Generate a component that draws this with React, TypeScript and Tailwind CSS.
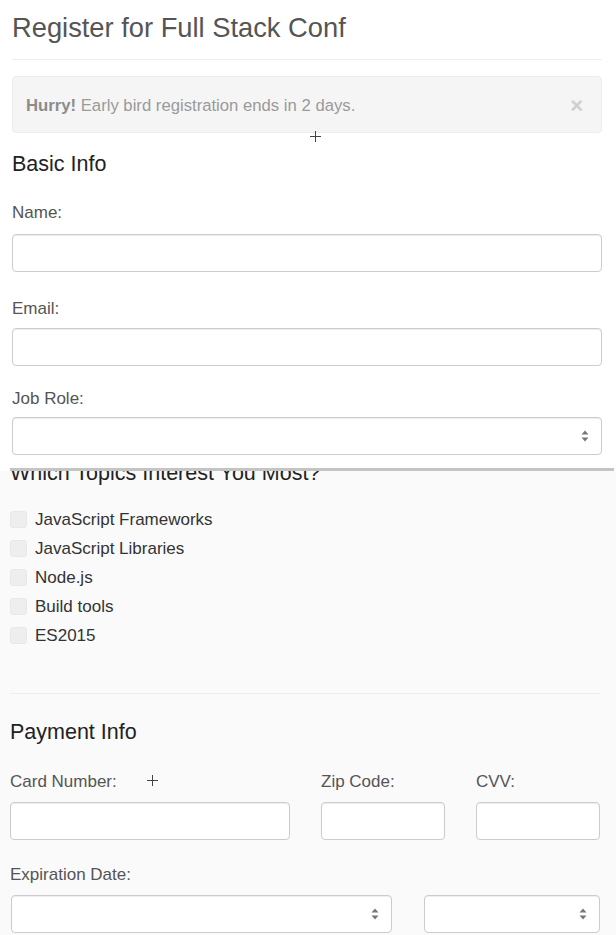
import React from 'react';

const topics = ['JavaScript Frameworks', 'JavaScript Libraries', 'Node.js', 'Build tools', 'ES2015'];

function Arrows() {
  return (
    <svg width="8" height="12" viewBox="0 0 8 12" className="pointer-events-none absolute right-[13px] top-1/2 -translate-y-1/2">
      <path d="M4 0.5 L7.5 4.5 L0.5 4.5 Z" fill="#777" />
      <path d="M4 11.5 L7.5 7.5 L0.5 7.5 Z" fill="#777" />
    </svg>
  );
}

function TextInput({ className = '' }: { className?: string }) {
  return (
    <input
      type="text"
      className={`block h-[38px] rounded-[4px] border border-[#cccccc] bg-white px-3 text-[16px] text-[#555] shadow-[inset_0_1px_1px_rgba(0,0,0,0.075)] outline-none ${className}`}
    />
  );
}

function SelectBox({ className = '' }: { className?: string }) {
  return (
    <div className={`relative ${className}`}>
      <select className="block h-[38px] w-full appearance-none rounded-[4px] border border-[#cccccc] bg-white px-3 text-[16px] text-[#555] shadow-[inset_0_1px_1px_rgba(0,0,0,0.075)] outline-none">
        <option value=""></option>
      </select>
      <Arrows />
    </div>
  );
}

function Cursor({ className }: { className: string }) {
  return (
    <svg width="11" height="11" viewBox="0 0 11 11" className={`pointer-events-none absolute ${className}`}>
      <path d="M5.5 0 V11 M0 5.5 H11" stroke="#444" strokeWidth="1" />
    </svg>
  );
}

export default function App() {
  return (
    <div className="relative min-h-[935px] w-[616px] overflow-hidden bg-white font-['Liberation_Sans',Arial,sans-serif]">
      <div className="ml-[12px] w-[590px]">
        <h1 className="mt-[12px] text-[27.3px] leading-[31px] font-normal text-[#555]">Register for Full Stack Conf</h1>
        <div className="mt-[16px] h-px bg-[#eeeeee]" />

        <div className="mt-[16px] flex h-[57px] items-center justify-between rounded-[4px] border border-[#ececec] bg-[#f5f5f5] pl-[13px] pr-[18px]">
          <p className="pt-[2px] text-[16.7px] text-[#9a9a9a]">
            <span className="font-bold text-[#8c8c8c]">Hurry!</span> Early bird registration ends in 2 days.
          </p>
          <span className="pt-[3px] text-[22px] leading-none font-bold text-[#cfcfcf]">×</span>
        </div>

        <h3 className="mt-[18px] text-[21.5px] leading-[27px] text-[#222]">Basic Info</h3>

        <label className="mt-[24px] block text-[17px] leading-[21px] text-[#555]">Name:</label>
        <TextInput className="mt-[11px] w-full" />

        <label className="mt-[26px] block text-[17px] leading-[21px] text-[#555]">Email:</label>
        <TextInput className="mt-[9px] w-full" />

        <label className="mt-[22px] block text-[17px] leading-[21px] text-[#555]">Job Role:</label>
        <SelectBox className="mt-[8px] w-full" />
      </div>

      <div className="mt-[13px] ml-[10px] h-[3px] w-[604px] bg-[#c4c4c4]" />

      <div className="bg-[#fafafa] pl-[10px] pb-[2px]">
        <div className="w-[590px]">
          <div className="h-[16px] overflow-hidden">
            <h3 className="-mt-[11px] text-[21.5px] leading-[27px] text-[#222]">Which Topics Interest You Most?</h3>
          </div>

          <div className="mt-[18px] flex flex-col">
            {topics.map((t) => (
              <label key={t} className="flex h-[29px] items-center gap-[8px]">
                <input type="checkbox" className="h-[17px] w-[17px] appearance-none rounded-[3px] border border-[#e8e8e8] bg-[#eeeeee]" />
                <span className="text-[17px] text-[#333]">{t}</span>
              </label>
            ))}
          </div>

          <div className="mt-[43px] h-px bg-[#eeeeee]" />

          <h3 className="mt-[25px] text-[21.5px] leading-[27px] text-[#222]">Payment Info</h3>

          <div className="mt-[25px] flex gap-[31px]">
            <div className="w-[280px]">
              <label className="block text-[17px] leading-[21px] text-[#555]">Card Number:</label>
              <TextInput className="mt-[10px] w-full" />
            </div>
            <div className="w-[124px]">
              <label className="block text-[17px] leading-[21px] text-[#555]">Zip Code:</label>
              <TextInput className="mt-[10px] w-full" />
            </div>
            <div className="w-[124px]">
              <label className="block text-[17px] leading-[21px] text-[#555]">CVV:</label>
              <TextInput className="mt-[10px] w-full" />
            </div>
          </div>

          <label className="mt-[24px] block text-[17px] leading-[21px] text-[#555]">Expiration Date:</label>
          <div className="mt-[10px] flex gap-[32px] pl-[1px]">
            <SelectBox className="w-[381px]" />
            <SelectBox className="w-[176px]" />
          </div>
        </div>
      </div>

      <Cursor className="left-[310px] top-[131px]" />
      <Cursor className="left-[147px] top-[775px]" />
    </div>
  );
}
